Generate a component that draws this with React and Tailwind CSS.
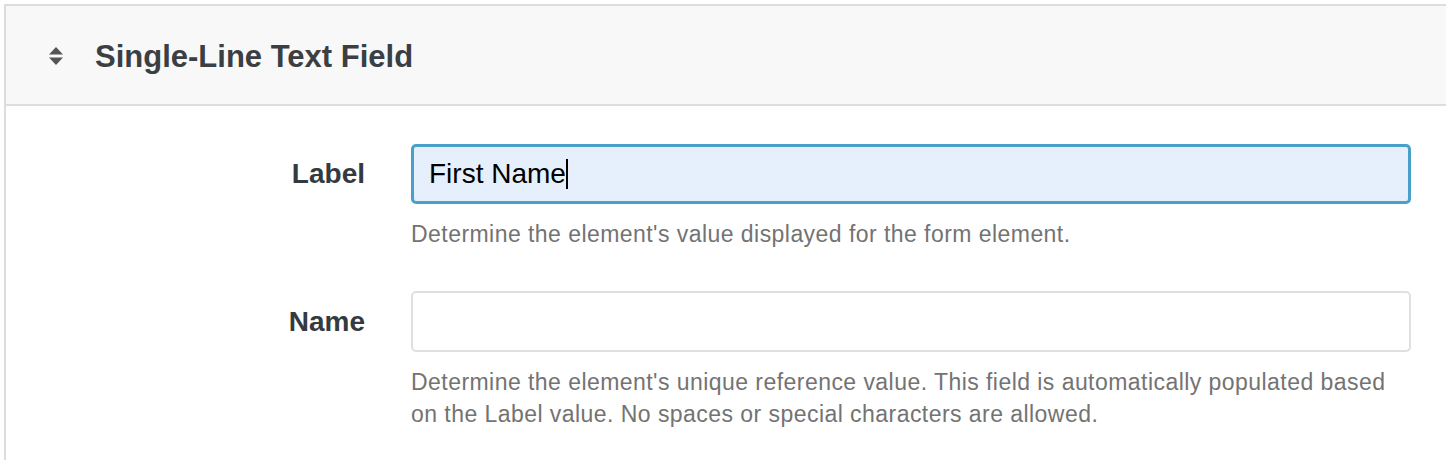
export default function App() {
  const font = { fontFamily: '"Liberation Sans", Arial, sans-serif' };
  return (
    <div className="w-[1446px] h-[460px] overflow-hidden bg-white pt-[4px] pl-[4px]" style={font}>
      <div className="border-t-2 border-l-2 border-[#dddddd] h-full">
        <div className="h-[100px] bg-[#f8f8f8] border-b-2 border-[#dddddd] flex items-center pl-[42px]">
          <svg width="16" height="18" viewBox="0 0 16 18" className="mr-[31px] mt-[2px]">
            <path d="M8 0 L15 7.5 L1 7.5 Z" fill="#555" />
            <path d="M1 10.5 L15 10.5 L8 18 Z" fill="#555" />
          </svg>
          <h2 className="text-[31px] font-semibold text-[#3a3f44] leading-none mt-[3px]">Single-Line Text Field</h2>
        </div>
        <div className="pt-[38px] pr-[35px]">
          <div className="flex">
            <div className="w-[359px] shrink-0 h-[60px] flex items-center justify-end text-[28px] font-bold text-[#333a40]">Label</div>
            <div className="ml-[46px] flex-1">
              <div className="h-[60px] rounded-[5px] border-[3px] border-[#4aa0c9] bg-[#e6f0fd] flex items-center pl-[15px] text-[28px] text-black">
                First Name<span className="inline-block w-[2px] h-[30px] bg-black" />
              </div>
              <p className="mt-[14px] text-[23px] tracking-[0.45px] leading-[32px] text-[#737373]">Determine the element's value displayed for the form element.</p>
            </div>
          </div>
          <div className="flex mt-[41px]">
            <div className="w-[359px] shrink-0 h-[61px] flex items-center justify-end text-[28px] font-bold text-[#333a40]">Name</div>
            <div className="ml-[46px] flex-1">
              <div className="h-[61px] rounded-[5px] border-2 border-[#e0e0e0] bg-white" />
              <p className="mt-[14px] text-[23px] tracking-[0.45px] leading-[32px] text-[#737373] whitespace-nowrap">Determine the element's unique reference value. This field is automatically populated based<br />on the Label value. No spaces or special characters are allowed.</p>
            </div>
          </div>
        </div>
      </div>
    </div>
  );
}
